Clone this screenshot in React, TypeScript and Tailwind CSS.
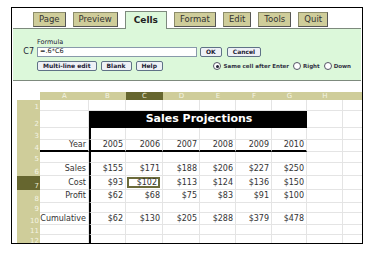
import React from 'react'

const font = { fontFamily: '"DejaVu Sans", Verdana, sans-serif' }

const tabs = ['Page', 'Preview', 'Cells', 'Format', 'Edit', 'Tools', 'Quit']
const cols = ['A', 'B', 'C', 'D', 'E', 'F', 'G', 'H', '']

const rows: Record<number, string[]> = {
  4: ['Year', '2005', '2006', '2007', '2008', '2009', '2010'],
  6: ['Sales', '$155', '$171', '$188', '$206', '$227', '$250'],
  7: ['Cost', '$93', '$102', '$113', '$124', '$136', '$150'],
  8: ['Profit', '$62', '$68', '$75', '$83', '$91', '$100'],
  10: ['Cumulative', '$62', '$130', '$205', '$288', '$379', '$478'],
}

function Tab({ label }: { label: string }) {
  if (label === 'Cells') {
    return (
      <div className="relative z-10 -mb-px flex h-[18px] items-center border border-b-0 border-[#7d8a7d] bg-[#dcf8da] px-[8px] text-[9px] font-bold text-[#222]">
        {label}
      </div>
    )
  }
  return (
    <div className="mb-[1px] flex h-[15px] items-center border border-[#8c8c6a] border-r-[#555] border-b-[#555] bg-[#cfcd9a] px-[5px] text-[8.5px] text-[#333]">
      {label}
    </div>
  )
}

function Btn({ children }: { children: React.ReactNode }) {
  return (
    <div className="flex h-[10px] items-center whitespace-nowrap rounded-[2px] border border-[#5f7286] bg-[#eef1f6] px-[5px] text-[6px] font-bold leading-none text-[#223]">
      {children}
    </div>
  )
}

function Radio({ on, label }: { on?: boolean; label: string }) {
  return (
    <div className="flex items-center gap-[2px] whitespace-nowrap text-[5.5px] font-bold text-[#334]">
      <span className="flex h-[8px] w-[8px] items-center justify-center rounded-full border border-[#556] bg-white">
        {on && <span className="h-[3px] w-[3px] rounded-full bg-[#223]" />}
      </span>
      {label}
    </div>
  )
}

function Cell({ r, c }: { r: number; c: number }) {
  const data = rows[r]
  const text = data && c < 7 ? data[c] : ''
  let cls = 'flex items-center justify-end whitespace-nowrap border-b border-r border-[#e4e4e4] pr-[2px] text-[8px] text-[#333]'
  if (c === 1 && r >= 3) cls += ' border-l-2 border-l-black'
  if (r === 4 && c <= 6) cls += ' border-b-2 border-b-black'
  if (r === 7 && c === 2) {
    return (
      <div className={cls + ' p-[1px]'}>
        <div className="flex h-full w-full items-center justify-end border-2 border-[#6b6b3a] pr-[1px]">{text}</div>
      </div>
    )
  }
  return <div className={cls}>{text}</div>
}

export default function App() {
  const rowNums = [1, 2, 3, 4, 5, 6, 7, 8, 9, 10, 11, 12]
  return (
    <div className="h-[255px] w-[374px] bg-white pl-[11px] pt-[7px]" style={font}>
      <div className="h-[237px] w-[352px] overflow-hidden border border-black bg-white">
        <div className="flex h-[20px] items-end gap-[7px] pl-[21px]">
          {tabs.map((t) => (
            <Tab key={t} label={t} />
          ))}
        </div>
        <div className="mx-[1px] h-[53px] border-y border-[#7d8a7d] bg-[#dcf8da] pt-[9px]">
          <div className="pl-[24px] text-[6.5px] leading-[8px] text-[#223]">Formula</div>
          <div className="flex items-center">
            <div className="w-[24px] pr-[3px] text-right text-[8px] text-[#223]">C7</div>
            <div className="flex h-[10px] w-[160px] items-center border border-[#8899aa] bg-white pl-[2px] text-[6.5px] text-[#222]">
              =.6*C6
            </div>
            <div className="ml-[3px] flex gap-[5px]">
              <Btn>OK</Btn>
              <Btn>Cancel</Btn>
            </div>
          </div>
          <div className="mt-[3px] flex items-center pl-[24px]">
            <div className="flex gap-[4px]">
              <Btn>Multi-line edit</Btn>
              <Btn>Blank</Btn>
              <Btn>Help</Btn>
            </div>
            <div className="ml-auto mr-[10px] flex gap-[4px]">
              <Radio on label="Same cell after Enter" />
              <Radio label="Right" />
              <Radio label="Down" />
            </div>
          </div>
        </div>
        <div className="ml-[5px] mt-[11px] grid grid-cols-[23px_49px_37px_37px_37px_36px_36px_35px_36px_20px] grid-rows-[8px_11px_17px_12px_12px_11px_13px_14px_13px_10px_12px_10px_10px]">
          <div className="bg-white" />
          {cols.map((c) => (
            <div
              key={c || 'x'}
              className={
                c === 'C'
                  ? 'flex items-center justify-center bg-[#66662f] text-[7px] leading-none text-[#e8e8d0]'
                  : 'flex items-center justify-center bg-[#cfcd9a] text-[7px] leading-none text-[#f4f4e4]'
              }
            >
              {c}
            </div>
          ))}
          {rowNums.map((r) => (
            <React.Fragment key={r}>
              <div
                className={
                  r === 7
                    ? 'flex items-end justify-end bg-[#66662f] pr-[1px] text-[7px] leading-[8px] text-[#e8e8d0]'
                    : 'flex items-end justify-end bg-[#cfcd9a] pr-[1px] text-[7px] leading-[8px] text-[#f4f4e4]'
                }
              >
                {r}
              </div>
              {r === 2 ? (
                <>
                  <div className="border-b border-r border-[#e4e4e4]" />
                  <div className="col-span-6 flex items-center justify-center border-l-2 border-black bg-black text-[11px] font-bold text-white">
                    Sales Projections
                  </div>
                  <div className="border-b border-r border-[#e4e4e4]" />
                  <div className="border-b border-r border-[#e4e4e4]" />
                </>
              ) : (
                cols.map((_, c) => <Cell key={c} r={r} c={c} />)
              )}
            </React.Fragment>
          ))}
        </div>
      </div>
    </div>
  )
}
